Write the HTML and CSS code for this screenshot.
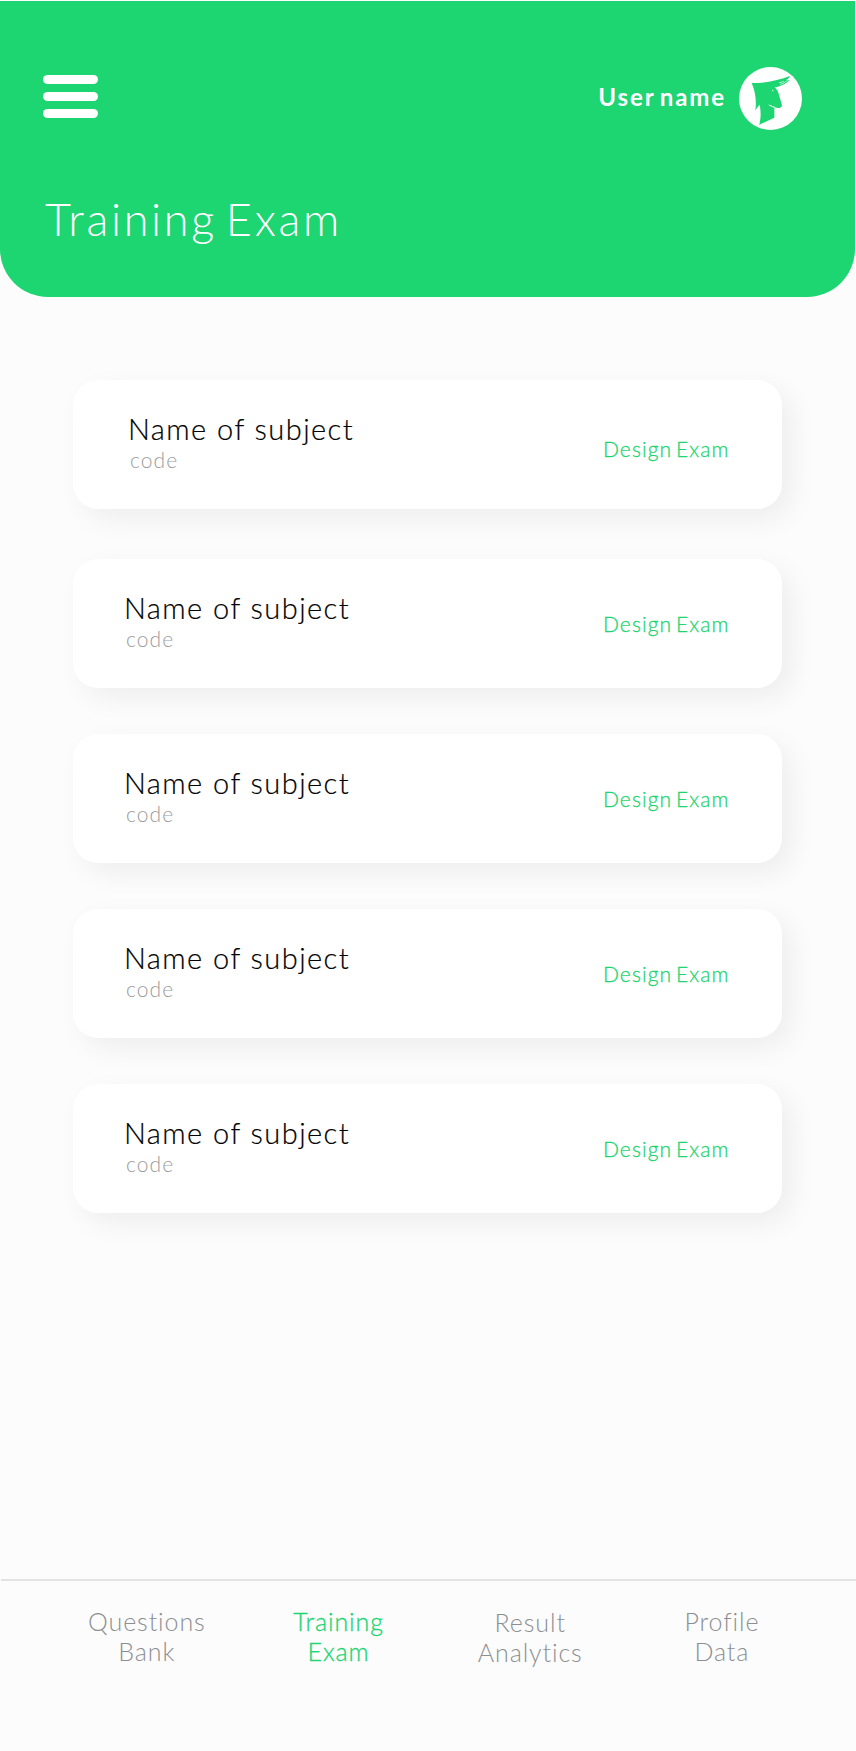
FILE: index.html
```html
<!DOCTYPE html>
<html lang="en">
<head>
<meta charset="utf-8">
<title>Training Exam</title>
<link rel="stylesheet" href="styles.css">
</head>
<body>
<div class="screen">
  <header class="header">
    <div class="topbar">
      <button class="menu" aria-label="Menu"><span></span><span></span><span></span></button>
      <div class="user">
        <span class="user-name">User name</span>
        <svg class="avatar" viewBox="27 21 189 189" aria-hidden="true">
          <circle cx="121.500" cy="115.500" r="94.500" fill="#fff"/>
          <path fill="#1dd571" d="M65 69C100 70 140 63 180 48C179 53 174 57 168 60C172 60 176 60 178 60C173 67 164 73 151 77C146 80 140 81 134 82C140 87 145 95 147 105L155 132C157 139 154 142 149 144C141 144 138 143 133 141V173L88 194C93 172 93 157 89 134C83 140 79 146 76 152C80 122 76 94 65 69Z"/>
          <path d="M151 73C160 70 168 65 175 59M147 69L161 64" fill="none" stroke="#fff" stroke-width="2"/>
          <path d="M117 134Q118 138 123 137Q127 142 134 141" fill="none" stroke="#fff" stroke-width="3"/>
          <path d="M126 90L130 93" stroke="#fff" stroke-width="3"/>
        </svg>
      </div>
    </div>
    <h1 class="title">Training Exam</h1>
  </header>
  <main class="subjects">
    <article class="card card-first">
      <div class="subject"><h2 class="name">Name of subject</h2><p class="code">code</p></div>
      <a class="design">Design Exam</a>
    </article>
    <article class="card">
      <div class="subject"><h2 class="name">Name of subject</h2><p class="code">code</p></div>
      <a class="design">Design Exam</a>
    </article>
    <article class="card">
      <div class="subject"><h2 class="name">Name of subject</h2><p class="code">code</p></div>
      <a class="design">Design Exam</a>
    </article>
    <article class="card">
      <div class="subject"><h2 class="name">Name of subject</h2><p class="code">code</p></div>
      <a class="design">Design Exam</a>
    </article>
    <article class="card">
      <div class="subject"><h2 class="name">Name of subject</h2><p class="code">code</p></div>
      <a class="design">Design Exam</a>
    </article>
  </main>
  <nav class="nav">
    <a class="tab"><span>Questions</span><span>Bank</span></a>
    <a class="tab active"><span>Training</span><span>Exam</span></a>
    <a class="tab tab-result"><span>Result</span><span>Analytics</span></a>
    <a class="tab"><span>Profile</span><span>Data</span></a>
  </nav>
</div>
</body>
</html>
```
FILE: styles.css
```css
* { box-sizing: border-box; }
body { margin: 0; background: #fcfcfc; font-family: Lato, "Open Sans", sans-serif; font-weight: 300; }
h1, h2, p { margin: 0; font-weight: inherit; }
.screen { width: 856px; height: 1751px; padding-top: 1px; display: flex; flex-direction: column; overflow: hidden; }
.header { flex: none; width: 855px; height: 295.500px; padding: 66px 53px 0 43px; background: #1dd571; border-radius: 0 0 48px 48px; color: #fff; }
.topbar { display: flex; justify-content: space-between; align-items: flex-start; height: 63px; }
.menu { display: flex; flex-direction: column; gap: 8px; width: 54.500px; margin: 8px 0 0; padding: 0; border: 0; background: none; }
.menu span { height: 9px; border-radius: 4.500px; background: #fff; }
.user { display: flex; align-items: center; gap: 13px; }
.user-name { padding-bottom: 3px; font-size: 24px; font-weight: 700; line-height: 30px; letter-spacing: 1.900px; word-spacing: -3px; }
.avatar { width: 63px; height: 63px; display: block; }
.title { margin-top: 61px; padding-left: 2px; font-size: 45px; font-weight: 300; line-height: 56px; letter-spacing: 2.700px; word-spacing: -6px; }
.subjects { flex: 1; padding: 83.500px 0 0 73px; display: flex; flex-direction: column; gap: 46px; }
.card { display: flex; flex: none; justify-content: space-between; width: 709px; height: 129px; padding: 31px 52.500px 0 51px; border-radius: 25px; background: #fff; box-shadow: 10px 10px 28px rgba(0, 0, 0, .06); }
.card-first { margin-bottom: 4px; padding-left: 55px; }
.name { font-size: 29px; line-height: 36px; letter-spacing: 1.450px; color: #000; -webkit-text-stroke: .2px; }
.code { padding-left: 2px; font-size: 21px; line-height: 25px; letter-spacing: 1.100px; color: #9c9c9c; }
.design { margin-top: 21px; font-size: 21px; line-height: 26px; letter-spacing: 1.100px; word-spacing: -3px; color: #1dd571; -webkit-text-stroke: .3px; }
.card-first .design { margin-top: 25px; }
.nav { flex: none; display: grid; grid-template-columns: repeat(4, 191.700px); height: 172px; margin-left: 1px; padding: 25px 0 0 50px; border-top: 2px solid #e3e3e3; font-size: 25px; line-height: 30px; letter-spacing: .9px; color: #8c8f92; }
.tab { display: flex; flex-direction: column; align-items: center; }
.tab-result { padding-top: 1px; }
.active { color: #1dd571; -webkit-text-stroke: .3px; }
```
